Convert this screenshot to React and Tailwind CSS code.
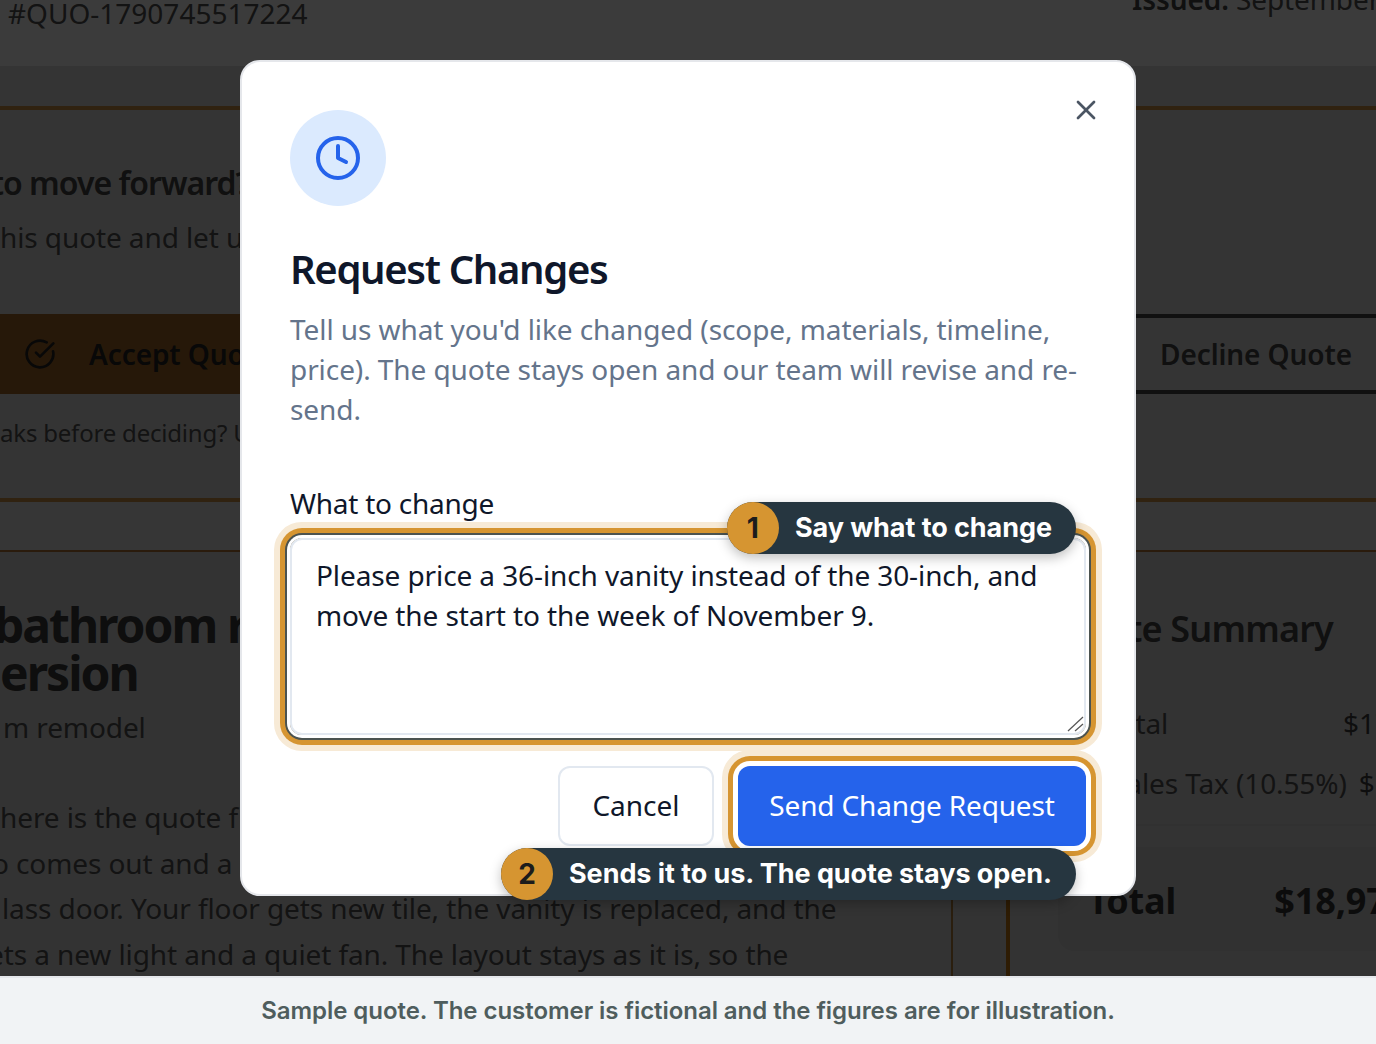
import { CircleCheckBig, Clock, X } from "lucide-react";

const HIGHLIGHT_FIELD = "shadow-[0_0_0_3px_#ffffff,0_0_0_5px_#4b5350,0_0_0_10px_#d69531,0_0_0_16px_#f7ead6]";
const HIGHLIGHT_BUTTON = "shadow-[0_0_0_5px_#ffffff,0_0_0_10px_#d69531,0_0_0_16px_#f7ead6]";

function Chip({ number, className, children }) {
  return (
    <div className={`absolute flex items-center h-[52px] rounded-full bg-[#263640] pr-6 shadow-[0_4px_12px_rgba(0,0,0,0.25)] font-['Inter',sans-serif] ${className}`}>
      <span className="flex items-center justify-center w-[52px] h-[52px] rounded-full bg-[#d69531] text-[#1c1c1c] text-[28px] font-bold">
        {number}
      </span>
      <span className="ml-4 text-white text-[27px] font-bold tracking-[-0.06px] whitespace-nowrap">{children}</span>
    </div>
  );
}

function BehindPage() {
  return (
    <div className="h-full text-[28px] tracking-[-0.1px] text-[#4c4c4c] whitespace-nowrap">
      <div className="flex justify-between h-[73px] bg-[#ebebeb] -mt-[7px] pl-2 pr-0">
        <span className="leading-10 tracking-normal">#QUO-1790745517224</span>
        <span className="-mt-[14px] ml-auto w-[244px] leading-10 overflow-hidden">
          <b className="text-[#404040] font-semibold">Issued:</b> September
        </span>
      </div>
      <div className="h-[40px] bg-[#d0d0d0]" />

      <div className="h-[396px] bg-[#d0d0d0] border-y-4 border-[#c08840]">
        <h2 className="mt-[53px] text-[32px] leading-10 font-semibold tracking-[-1px] text-[#404040] -ml-[9px]">to move forward?</h2>
        <p className="mt-[14px] leading-10">his quote and let u</p>
        <div className="flex justify-between mt-[57px] h-[80px]">
          <div className="flex items-center w-[500px] bg-[#985f24] pl-6 font-semibold text-[#202020]">
            <CircleCheckBig size={32} strokeWidth={2} className="mr-[33px]" />
            Accept Quote
          </div>
          <div className="flex items-center w-[240px] pl-6 border-y-4 border-[#404040] font-semibold text-[#404040]">
            Decline Quote
          </div>
        </div>
        <p className="mt-[19px] text-[24px] leading-10 tracking-[-0.2px]">aks before deciding? U</p>
      </div>

      <div className="h-[48px] bg-[#d6d6d6]" />
      <div className="flex h-[426px] bg-[#cccccc] border-t-2 border-[#a86c30]">
        <div className="w-[953px] shrink-0 border-r-2 border-[#a87838] pt-[49px] overflow-hidden">
          <h1 className="-ml-[6px] text-[48px] leading-[48px] font-bold tracking-[-2px] text-[#383838]">bathroom r</h1>
          <h1 className="text-[48px] leading-[48px] font-bold tracking-[-2px] text-[#383838]">ersion</h1>
          <p className="ml-[3px] mt-[8px] leading-[44px]">m remodel</p>
          <div className="mt-[46px] leading-[45.5px]">
            <p>here is the quote f</p>
            <p className="-ml-[8px]">o comes out and a</p>
            <p className="ml-[2px]">lass door. Your floor gets new tile, the vanity is replaced, and the</p>
            <p className="-ml-[12px]">ets a new light and a quiet fan. The layout stays as it is, so the</p>
          </div>
        </div>
        <div className="ml-[53px] flex-1 border-l-4 border-[#b87010] pl-[48px] pt-[57px] overflow-hidden">
          <h2 className="flex justify-end w-[275px] text-[36px] leading-10 font-semibold tracking-[-0.8px] text-[#404040]">Quote Summary</h2>
          <div className="flex justify-between pl-[1px] mt-[54px] leading-10 w-[388px]">
            <span>Subtotal</span>
            <span className="text-[#383838]">$17,160</span>
          </div>
          <div className="flex pl-[53px] mt-[20px] leading-10 w-[400px]">
            <span>Sales Tax (10.55%)</span>
            <span className="ml-3 text-[#383838]">$1,810</span>
          </div>
          <div className="mt-[21px] w-[400px] border-t-2 border-[#c4c4c4]" />
          <div className="flex items-center mt-[21px] pt-1 h-[104px] w-[500px] rounded-2xl bg-[#c2c2c2] pl-[30px] text-[36px] font-bold text-[#303030]">
            <span>Total</span>
            <span className="ml-[98px]">$18,970</span>
          </div>
        </div>
      </div>
    </div>
  );
}

function RequestChangesModal() {
  return (
    <div className="relative w-[896px] h-[836px] rounded-[20px] border-2 border-[#e5e7eb] bg-white p-12">
      <button className="absolute top-[24px] right-[24px] flex items-center justify-center w-12 h-12 text-[#4b5563]">
        <X size={32} strokeWidth={2} />
      </button>

      <div className="flex items-center justify-center w-24 h-24 rounded-full bg-[#dbeafe] text-[#2563eb]">
        <Clock size={48} strokeWidth={2} />
      </div>

      <h2 className="mt-[39px] mb-4 text-[40px] leading-[48px] font-semibold tracking-[-1.35px] text-[#0f172a]">Request Changes</h2>
      <p className="text-[28px] leading-10 tracking-[-0.08px] text-[#64748b]">
        Tell us what you'd like changed (scope, materials, timeline, price). The quote stays open and our team will revise and re-send.
      </p>

      <label className="block mt-[54px] text-[28px] leading-10 tracking-[-0.25px] text-[#0f172a]">What to change</label>

      <div className="relative mt-[15px]">
        <textarea
          className={`block w-full h-[197px] resize-none rounded-xl border-2 border-[#e2e8f0] px-6 pt-[15px] pb-4 text-[28px] leading-10 tracking-[-0.1px] text-[#0f172a] outline-none ${HIGHLIGHT_FIELD}`}
          defaultValue="Please price a 36-inch vanity instead of the 30-inch, and move the start to the week of November 9."
        />
        <svg className="absolute right-[2px] bottom-[2px]" width="20" height="20" viewBox="0 0 20 20" fill="none" stroke="#555555" strokeWidth="1.2">
          <path d="M19 4 L4 18" />
          <path d="M19 11 L11 18" />
        </svg>
        <Chip number="1" className="-top-[36px] right-[10px]">Say what to change</Chip>
      </div>

      <div className="relative flex justify-end gap-6 mt-[31px]">
        <button className="w-[156px] h-20 pb-[2px] rounded-xl border-2 border-[#e2e8f0] bg-white text-[28px] text-[#0f172a]">Cancel</button>
        <button className={`w-[348px] h-20 pb-[2px] rounded-xl bg-[#2563eb] text-[28px] tracking-[-0.15px] text-white ${HIGHLIGHT_BUTTON}`}>
          Send Change Request
        </button>
        <Chip number="2" className="top-[82px] right-[10px]">Sends it to us. The quote stays open.</Chip>
      </div>
    </div>
  );
}

export default function App() {
  return (
    <div className="flex flex-col h-[1044px] overflow-hidden bg-white font-['Noto_Sans',sans-serif]">
      <main className="relative h-[976px] shrink-0 overflow-hidden">
        <BehindPage />
        <div className="absolute inset-0 flex justify-center pt-[60px] bg-black/75">
          <RequestChangesModal />
        </div>
      </main>
      <footer className="flex items-center justify-center flex-1 border-t-2 border-[#e5e7eb] bg-[#f1f3f5] font-['Inter',sans-serif] text-[24px] font-semibold tracking-[-0.05px] text-[#4f5d5d]">
        Sample quote. The customer is fictional and the figures are for illustration.
      </footer>
    </div>
  );
}
